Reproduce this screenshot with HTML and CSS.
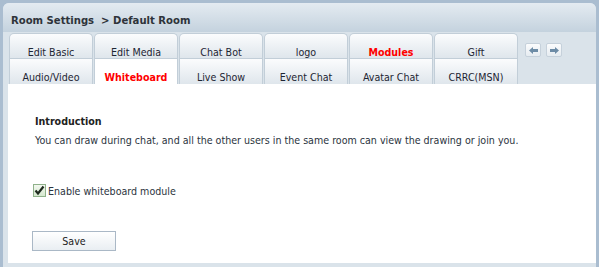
FILE: index.html
```html
<!DOCTYPE html>
<html lang="en">
<head>
  <meta charset="UTF-8">
  <title>Room Settings</title>
  <link rel="stylesheet" href="styles.css">
</head>
<body>

  <div class="panel">
    <div class="header">Room Settings &nbsp;&gt; Default Room</div>

    <div class="tabs">
      <div class="tab-row">
        <div class="tab">Edit Basic</div>
        <div class="tab">Edit Media</div>
        <div class="tab">Chat Bot</div>
        <div class="tab">logo</div>
        <div class="tab tab-red">Modules</div>
        <div class="tab">Gift</div>
        <div class="arrows">
          <span class="arrow-btn">
            <svg width="9" height="7" viewBox="0 0 9 7"><path d="M0 3.5 L4 0 L4 2 L9 2 L9 5 L4 5 L4 7 Z" fill="#6d8ca6"/></svg>
          </span>
          <span class="arrow-btn">
            <svg width="9" height="7" viewBox="0 0 9 7"><path d="M9 3.5 L5 0 L5 2 L0 2 L0 5 L5 5 L5 7 Z" fill="#6d8ca6"/></svg>
          </span>
        </div>
      </div>
      <div class="tab-row">
        <div class="tab">Audio/Video</div>
        <div class="tab tab-red active">Whiteboard</div>
        <div class="tab">Live Show</div>
        <div class="tab">Event Chat</div>
        <div class="tab">Avatar Chat</div>
        <div class="tab">CRRC(MSN)</div>
      </div>
    </div>

    <div class="content">
      <h3 class="intro-title">Introduction</h3>
      <p class="intro-text">You can draw during chat, and all the other users in the same room can view the drawing or join you.</p>

      <label class="check-line">
        <span class="check">
          <svg width="11" height="11" viewBox="0 0 11 11"><path d="M1.5 5.5 L4 8.5 L9.5 1.5" fill="none" stroke="#1f2a1f" stroke-width="2.2"/></svg>
        </span>
        Enable whiteboard module
      </label>

      <button class="save-btn" type="button">Save</button>
    </div>
  </div>

</body>
</html>
```

FILE: styles.css
```css
body {
  margin: 0;
  background-color: #aabdd0;
  font-family: "DejaVu Sans Condensed", "DejaVu Sans", sans-serif;
  font-size: 10.6px;
  color: #2b3440;
}

.panel {
  margin: 3px 3px 0 3px;
  background-color: #dae3ea;
  border-radius: 6px 6px 0 0;
  padding-bottom: 4px;
}

.header {
  height: 26px;
  padding: 3px 0 0 8px;
  line-height: 30px;
  font-weight: bold;
  font-size: 11.2px;
  color: #2e333a;
  border-radius: 6px 6px 0 0;
  background: linear-gradient(#e4ebf1, #c4d2de);
}

.tabs {
  padding: 1px 0 0 6px;
}

.tab-row {
  display: flex;
  gap: 1px;
}

.tab {
  width: 82px;
  height: 13px;
  padding-top: 11px;
  line-height: 14px;
  text-align: center;
  color: #1d2533;
  border: 1px solid #c2ced8;
  border-bottom: none;
  border-radius: 5px 5px 0 0;
  background: linear-gradient(#fbfcfd, #dfe6ec);
}

.tab-row + .tab-row .tab {
  height: 14px;
  border-radius: 0;
}

.tab-red {
  color: #ff0000;
  font-weight: bold;
}

.tab.active {
  background: #ffffff;
}

.arrows {
  display: flex;
  gap: 5px;
  margin: 10px 0 0 6px;
}

.arrow-btn {
  width: 14px;
  height: 12px;
  display: flex;
  align-items: center;
  justify-content: center;
  border: 1px solid #c6d1db;
  border-radius: 2px;
  background: linear-gradient(#fbfcfd, #e6ecf1);
}

.content {
  margin-left: 5px;
  height: 179px;
  padding: 29px 0 0 27px;
  box-sizing: border-box;
  background-color: #ffffff;
}

.intro-title {
  margin: 0;
  font-size: 10.6px;
  font-weight: bold;
  line-height: 16px;
  color: #222;
}

.intro-text {
  margin: 3px 0 0 0;
  line-height: 16px;
}

.check-line {
  display: flex;
  align-items: center;
  margin: 36px 0 0 -2px;
}

.check {
  width: 11px;
  height: 11px;
  margin-right: 2px;
  display: flex;
  border: 1px solid #8fb18a;
  background: linear-gradient(#f2f8ef, #d6e8cf);
}

.save-btn {
  display: block;
  margin: 34px 0 0 -3px;
  width: 84px;
  height: 20px;
  padding: 0;
  font-family: inherit;
  font-size: 10.6px;
  color: #222;
  border: 1px solid #aab8c6;
  background: linear-gradient(#ffffff, #e9eef2);
}
```
